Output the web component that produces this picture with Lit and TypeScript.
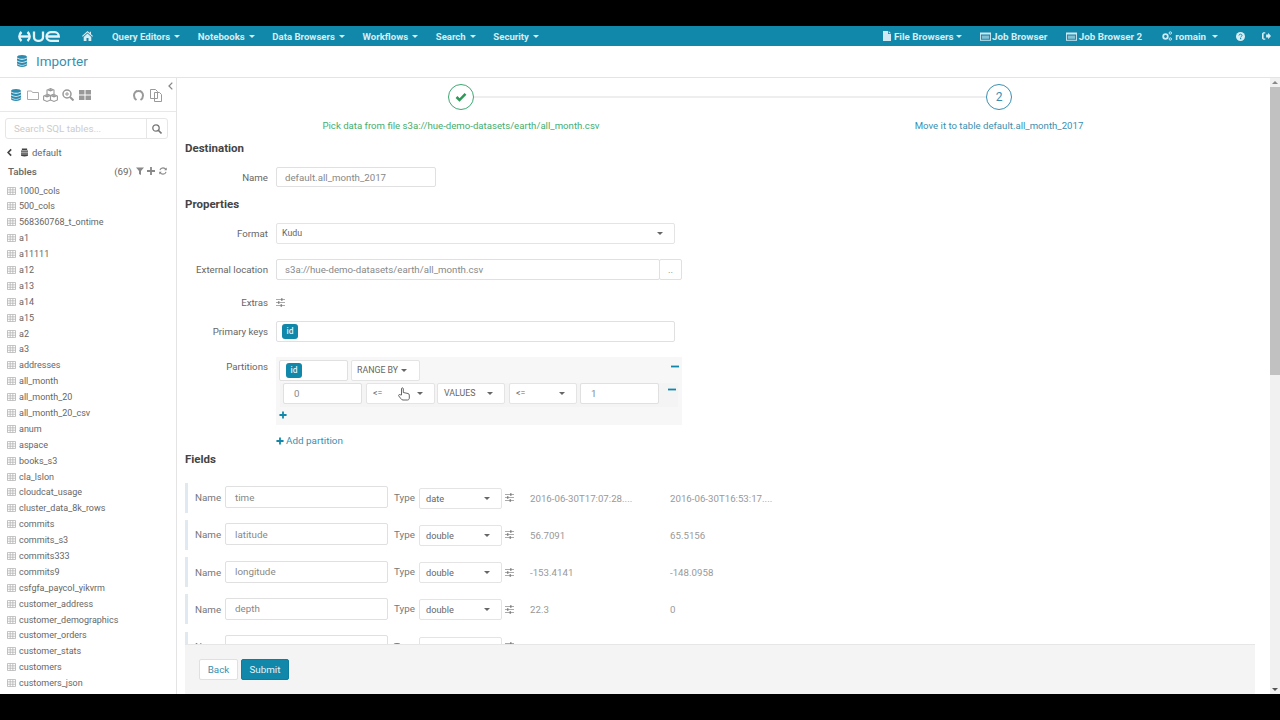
import { LitElement, html, css, svg } from "lit";
import { customElement } from "lit/decorators.js";

const ic = (w: number, h: number, vb: string, body: unknown, cls = "") =>
  html`<svg class="ic ${cls}" width=${w} height=${h} viewBox=${vb}>${body}</svg>`;

const db = (s = 12, cls = "") => ic(s, s, "0 0 12 12", svg`<path fill="currentColor" d="M6 0C3 0 1 .8 1 1.900S3 3.800 6 3.800s5-.8 5-1.900S9 0 6 0zM1 3.300V5c0 1.100 2 1.900 5 1.900S11 6.100 11 5V3.300C10.200 4.200 8.300 4.700 6 4.700S1.800 4.200 1 3.300zM1 6.300V8c0 1.100 2 1.900 5 1.900s5-.8 5-1.900V6.300C10.200 7.200 8.300 7.700 6 7.700S1.800 7.200 1 6.300zM1 9.100v1c0 1.100 2 1.900 5 1.900s5-.8 5-1.900v-1c-.8.900-2.700 1.500-5 1.500s-4.200-.6-5-1.500z"/>`, cls);
const caret = () => html`<span class="caret"></span>`;
const sliders = () => ic(9, 9, "0 0 9 9", svg`<path stroke="#a0a0a0" stroke-width=".9" fill="none" d="M0 1.500h9M0 4.500h9M0 7.500h9"/><path stroke="#808080" stroke-width="1.500" d="M5.800 .3v2.400M2.700 3.300v2.400M5.300 6.300v2.400"/>`);
const tableIc = () => ic(9, 8, "0 0 10 9", svg`<path fill="none" stroke="#b4b4b4" stroke-width=".9" d="M.5.500h9v8h-9zM.5 3.200h9M.5 5.900h9M3.500.500v8M6.500.500v8"/>`, "tbl");
const winIc = () => ic(11, 9, "0 0 12 9", svg`<path fill="#cfe8f1" d="M0 0h12v9H0zM1 2.200v5.800h10V2.200z"/><path fill="#cfe8f1" d="M2 3.500h8v3.500H2z" opacity=".6"/>`);

const tables = ["1000_cols","500_cols","568360768_t_ontime","a1","a11111","a12","a13","a14","a15","a2","a3","addresses","all_month","all_month_20","all_month_20_csv","anum","aspace","books_s3","cla_lslon","cloudcat_usage","cluster_data_8k_rows","commits","commits_s3","commits333","commits9","csfgfa_paycol_yikvrm","customer_address","customer_demographics","customer_orders","customer_stats","customers","customers_json"];

const fields = [
  { n: "time", t: "date", a: "2016-06-30T17:07:28....", b: "2016-06-30T16:53:17...." },
  { n: "latitude", t: "double", a: "56.7091", b: "65.5156" },
  { n: "longitude", t: "double", a: "-153.4141", b: "-148.0958" },
  { n: "depth", t: "double", a: "22.3", b: "0" },
  { n: "", t: "double", a: "2.3", b: "1" },
];

@customElement("app-root")
export class AppRoot extends LitElement {
  static styles = css`
    :host { display: flex; flex-direction: column; width: 1280px; height: 720px; background: #000; font-family: Roboto, "Liberation Sans", sans-serif; color: #666; overflow: hidden; }
    .ic { display: block; flex: none; }
    .black { height: 26px; flex: none; background: #000; }
    .nav { height: 20px; flex: none; background: #1187a9; display: flex; align-items: center; color: #d6edf4; font-size: 9.600px; font-weight: 700; padding-left: 18px; white-space: nowrap; }
    .nav .logo { margin-right: 22px; }
    .nav .home { margin-right: 19px; }
    .nav .item { display: flex; align-items: center; margin-right: 17.600px; }
    .nav .item .ic { margin-right: 3px; }
    .nav .right { margin-left: auto; display: flex; align-items: center; padding-right: 9px; font-size: 9.800px; }
    .nav .right .item:first-child { margin-right: 18px; }
    .nav .right .item:first-child .caret { margin-left: 2px; }
    .nav .job .ic { margin-right: 1.500px; }
    .nav .m20 { margin-right: 19px; }
    .nav .m21 { margin-right: 20px; }
    .nav .m18 { margin-right: 18px; }
    .nav .m17 { margin-right: 17px; }
    .nav .m17 .ic { margin-right: 0; }
    .caret { display: inline-block; width: 0; height: 0; border-left: 3px solid transparent; border-right: 3px solid transparent; border-top: 3px solid currentColor; margin-left: 4px; }
    .nav .wide { margin-left: 6px; }
    .title { height: 32px; flex: none; box-sizing: border-box; border-bottom: 1px solid #e4e4e4; padding-bottom: 2px; background: #fff; display: flex; align-items: center; padding-left: 16px; color: #3a8fb0; font-size: 13.500px; gap: 8px; }
    .title .ic { color: #2e8bb0; }
    .body { height: 616px; flex: none; display: flex; background: #fff; }
    .side { width: 177px; flex: none; box-sizing: border-box; border-right: 1px solid #e4e4e4; position: relative; overflow: hidden; font-size: 9.100px; }
    .collapse { position: absolute; right: 3px; top: 4px; }
    .icons { height: 34px; box-sizing: border-box; border-bottom: 1px solid #e8e8e8; display: flex; align-items: center; padding: 1px 0 0 9.500px; color: #aaa; }
    .icons .db { color: #2e8bb0; margin-right: 5.500px; }
    .sp3 { width: 3px; flex: none; }
    .sp4 { width: 4px; flex: none; }
    .sp5 { width: 5px; flex: none; }
    .sp6 { width: 6px; flex: none; }
    .sp9 { width: 9px; flex: none; }
    .sp42 { width: 42px; flex: none; }
    .search { margin: 6px 0 0 5px; width: 163px; height: 21px; display: flex; box-sizing: border-box; border: 1px solid #e6e6e6; border-radius: 3px; align-items: center; color: #ccc; font-size: 9.800px; }
    .search span { flex: 1; padding-left: 8px; }
    .search div { width: 21px; height: 100%; box-sizing: border-box; border-left: 1px solid #e6e6e6; display: flex; align-items: center; justify-content: center; }
    .dbrow { display: flex; align-items: center; height: 14px; margin-top: 6px; padding-left: 7px; color: #666; font-size: 9.500px; }
    .tablesrow { display: flex; align-items: center; height: 14px; margin-top: 5px; padding: 0 9px 0 8px; font-weight: 500; font-size: 9.800px; color: #666; }
    .tablesrow .cnt { margin-left: auto; margin-right: 4px; font-weight: 400; }
    .list { margin-top: 4.600px; }
    .tr { height: 15.900px; display: flex; align-items: center; padding-left: 7px; gap: 3px; white-space: nowrap; color: #666; font-size: 9px; }
    .main { flex: 1; min-width: 0; display: flex; flex-direction: column; }
    .scrollarea { flex: 1; min-height: 0; overflow: hidden; padding-left: 8px; }
    .circles { display: flex; align-items: center; margin: 6px 0 0 263px; width: 564px; height: 26px; }
    .circle { width: 26px; height: 26px; box-sizing: border-box; border-radius: 50%; border: 1px solid #3fa873; color: #2b9a58; display: flex; align-items: center; justify-content: center; flex: none; }
    .circle.blue { border-color: #3a8fb0; color: #3a8fb0; font-size: 12px; }
    .line { flex: 1; height: 2px; background: #eee; }
    .steps { display: grid; grid-template-columns: 538px 538px; margin: 9px 0 0 7px; height: 14px; font-size: 9.650px; line-height: 14px; text-align: center; white-space: nowrap; }
    .steps .g { color: #44ad6e; }
    .steps .b { color: #3a8fb0; }
    h3 { margin: 0; font-size: 11.500px; line-height: 16px; height: 16px; font-weight: 700; color: #444; }
    .h-dest { margin-top: 7px; }
    .h-prop { margin-top: 9px; }
    .h-fields { margin-top: 3px; margin-bottom: 16px; }
    .row { display: flex; align-items: center; font-size: 9.700px; }
    .lab { width: 83px; text-align: right; margin-right: 8px; flex: none; color: #666; white-space: nowrap; }
    .in { box-sizing: border-box; border: 1px solid #e0e0e0; border-radius: 2px; background: #fff; display: flex; align-items: center; color: #888; font-size: 9.700px; white-space: nowrap; flex: none; height: 21px; padding-left: 10px; }
    .sel { box-sizing: border-box; border: 1px solid #e4e4e4; border-radius: 2px; background: #fff; display: flex; align-items: center; justify-content: space-between; font-size: 8.800px; padding: 0 11px 0 6px; white-space: nowrap; position: relative; color: #666; flex: none; height: 21px; }
    .sel .caret { color: #666; margin: 0; }
    .badge { background: #1187a9; color: #dff2f7; font-size: 8.500px; border-radius: 3px; width: 16px; height: 15px; display: flex; align-items: center; justify-content: center; font-weight: 500; }
    .mt11 { margin-top: 11px; }
    .mt15 { margin-top: 15px; }
    .r-extras { margin-top: 16px; height: 14px; }
    .w-name { width: 160px; height: 20px; padding-left: 8px; }
    .w-format { width: 399px; height: 20.500px; padding-left: 5px; }
    .w-loc { width: 384px; padding-left: 8px; }
    .w-dots { width: 23px; justify-content: center; margin-left: -1px; padding-left: 0; }
    .w-pk { width: 399px; padding-left: 5px; }
    .w-pid { width: 69px; padding-left: 6px; }
    .w-range { width: 69px; justify-content: flex-start; gap: 3px; padding-left: 5px; }
    .w-from { width: 79px; }
    .w-op { width: 69px; margin-left: 1px; }
    .w-val { width: 68px; margin-left: -1px; }
    .w-op2 { width: 68px; margin-left: 1px; }
    .parts { width: 406px; height: 68px; background: #f7f7f7; box-sizing: border-box; padding-top: 3px; flex: none; }
    .plab { align-items: flex-start; margin-top: 15px; }
    .plab .lab { margin-top: 4px; }
    .pr1 { display: flex; align-items: center; height: 21px; padding-left: 3px; gap: 3px; }
    .pr1 .minus { margin-left: auto; margin-right: 3px; margin-top: -8px; }
    .pr2 { display: flex; height: 24px; margin: 2px 4px 0 4px; padding: 0 0 0 3px; gap: 3px; background: #f4f4f4; font-size: 9px; align-items: flex-start; }
    .pr2 .minus { margin: 5px 0 0 6px; }
    .cursor { position: absolute; left: 31px; top: 3px; }
    .plusrow { padding-left: 3px; margin-top: 4px; }
    .add { display: flex; align-items: center; gap: 2px; margin: 9px 0 0 91px; height: 14px; color: #3a8fb0; font-size: 9.900px; }
    .frow { height: 30px; margin-bottom: 7.300px; display: flex; align-items: center; border-left: 3px solid #dfe9ef; font-size: 9.800px; white-space: nowrap; }
    .frow .nm { margin-left: 7px; width: 30px; color: #777; }
    .frow .in { width: 163px; height: 22px; padding-left: 9px; font-size: 9.800px; color: #888; margin-top: -1px; }
    .frow .ty { margin-left: 6px; width: 25px; color: #777; margin-top: -1px; }
    .frow .sel { width: 83px; height: 21px; font-size: 9.200px; margin-right: 3px; margin-top: 1px; }
    .frow .sa { margin-left: 16px; width: 140px; color: #999; font-size: 9.700px; margin-top: 1px; }
    .frow .sb { color: #999; font-size: 9.700px; margin-top: 1px; }
    .foot { height: 50px; flex: none; box-sizing: border-box; margin: 0 15px 0 8px; background: #f4f4f4; border-top: 1px solid #e6e6e6; display: flex; align-items: center; padding: 0 0 1px 14px; gap: 3px; font-size: 9.800px; }
    .btn { height: 21px; box-sizing: border-box; border-radius: 2px; display: flex; align-items: center; justify-content: center; }
    .back { width: 39px; background: #fff; border: 1px solid #e0e0e0; color: #3a8fb0; }
    .sub { width: 48px; background: #1187a9; color: #e4f4f8; border: 1px solid #0e7c9c; }
    .mainwrap { flex: 1; min-width: 0; display: flex; }
    .sb-track { width: 10px; flex: none; background: #f1f1f1; display: flex; flex-direction: column; align-items: center; }
    .sb-up { width: 0; height: 0; margin: 3px 0 3px; border-left: 3px solid transparent; border-right: 3px solid transparent; border-bottom: 3px solid #888; }
    .sb-thumb { width: 10px; height: 288px; background: #c1c1c1; }
    .sb-dn { width: 0; height: 0; margin-top: auto; margin-bottom: 3px; border-left: 3px solid transparent; border-right: 3px solid transparent; border-top: 3px solid #555; }
  `;

  render() {
    const plus = (s = 9) => ic(s, s, "0 0 9 9", svg`<path stroke="#1187a9" stroke-width="2" d="M4.500 .5v8M.5 4.500h8"/>`);
    const minus = () => ic(8, 3, "0 0 8 3", svg`<path stroke="#1187a9" stroke-width="1.800" d="M0 1.500h8"/>`, "minus");
    return html`
      <div class="black"></div>
      <div class="nav">
        ${ic(42, 11, "0 0 42 11", svg`<g fill="none" stroke="#e4f3f7" stroke-width="2.400"><path d="M3.500 1C1.700 2.500 1.300 4 1.300 5.500S1.700 8.500 3.500 10M9.500 1c1.800 1.500 2.200 3 2.200 4.500s-.4 3-2.200 4.500" /><path d="M2 5.500h9" /></g><g fill="none" stroke="#e4f3f7" stroke-width="2.300"><path d="M16 .5v5.500a3.700 3.700 0 0 0 3.700 3.800h1.600a3.700 3.700 0 0 0 3.700-3.800V.5" /><path d="M28.500 5.500H40.800a4 4.300 0 0 0-4-4.300h-4a4.300 4.300 0 0 0 0 8.600H41" /></g>`, "logo")}
        ${ic(11, 10, "0 0 11 10", svg`<path fill="#d6edf4" d="M5.500 0 0 5l.7.700L5.500 1.400l4.800 4.300.7-.7-2-1.800V.8H7.800v1.300zM1.700 6v4h2.800V7H6.500v3h2.800V6L5.500 2.600z"/>`, "home")}
        <span class="item">Query Editors${caret()}</span>
        <span class="item">Notebooks${caret()}</span>
        <span class="item">Data Browsers${caret()}</span>
        <span class="item">Workflows${caret()}</span>
        <span class="item">Search${caret()}</span>
        <span class="item">Security${caret()}</span>
        <div class="right">
          <span class="item">${ic(8, 10, "0 0 8 10", svg`<path fill="#cfe8f1" d="M0 0h5v3h3v7H0zM5.700 0 8 2.300H5.700z"/>`)}File Browsers${caret()}</span>
          <span class="item job m20">${winIc()}Job Browser</span>
          <span class="item job m21">${winIc()}Job Browser 2</span>
          <span class="item m18">${ic(10, 10, "0 0 10 10", svg`<circle cx="3.500" cy="5.500" r="2.300" fill="none" stroke="#cfe8f1" stroke-width="1.800"/><circle cx="8.300" cy="2" r="1.200" fill="none" stroke="#cfe8f1"/><circle cx="8.300" cy="8" r="1.200" fill="none" stroke="#cfe8f1"/>`)}romain<span class="caret wide"></span></span>
          <span class="item m17">${ic(9, 9, "0 0 10 10", svg`<circle cx="5" cy="5" r="5" fill="#d6edf4"/><path d="M3.300 3.900C3.400 2.900 4.100 2.400 5 2.400c1 0 1.700.6 1.700 1.400 0 1.200-1.500 1.100-1.500 2.300" fill="none" stroke="#1187a9" stroke-width="1.100"/><path d="M4.500 6.800h1.300V8H4.500z" fill="#1187a9"/>`)}</span>
          ${ic(9, 8, "0 0 11 9", svg`<path fill="#d6edf4" d="M0 1.500 1.500 0H4v1.400H2v6.200h2V9H1.500L0 7.500zM5 2.700h2.500V.5L11 4.500 7.500 8.500V6.300H5z"/>`)}
        </div>
      </div>
      <div class="title">${db(12)}<span>Importer</span></div>
      <div class="body">
        <div class="side">
          <div class="collapse">${ic(5, 8, "0 0 5 8", svg`<path d="M4.300.6 1 4l3.300 3.400" fill="none" stroke="#888" stroke-width="1.300"/>`)}</div>
          <div class="icons">
            ${db(12, "db")}
            ${ic(12, 10, "0 0 12 10", svg`<path d="M.5 1h4l1 1.500h6v7h-11z" fill="none" stroke="#aaa"/>`)}
            <span class="sp4"></span>
            ${ic(15, 14, "0 0 15 14", svg`<g fill="#fff" stroke="#999" stroke-width="1.100"><path d="M7.500 .6 11 2V6L7.500 7.400 4 6V2z"/><path d="M4 6.500 7.500 8V12L4 13.400 .6 12V8z"/><path d="M11 6.500 14.400 8V12L11 13.400 7.500 12V8z"/></g><g fill="#999"><path d="M7.500 1 10.600 2.200 7.500 3.400 4.400 2.200zM4 7 7 8.200 4 9.400 1 8.200zM11 7 14 8.200 11 9.400 8 8.200z"/></g>`)}
            <span class="sp4"></span>
            ${ic(12, 12, "0 0 12 12", svg`<circle cx="5" cy="5" r="4" fill="none" stroke="#999" stroke-width="1.500"/><path d="M8 8l3.500 3.500" stroke="#999" stroke-width="2"/><path d="M3 5h4M5 3v4" stroke="#999"/>`)}
            <span class="sp5"></span>
            ${ic(12, 10, "0 0 12 10", svg`<path fill="#999" d="M0 0h5.500v4.500H0zM6.500 0H12v4.500H6.500zM0 5.500h5.500V10H0zM6.500 5.500H12V10H6.500z"/>`)}
            <span class="sp42"></span>
            ${ic(11, 11, "0 0 11 11", svg`<path d="M3.500 10C2 9 1 7.500 1 5.500 1 3 3 1 5.500 1S10 3 10 5.500C10 7.500 9 9 7.500 10" fill="none" stroke="#999" stroke-width="2"/><path d="M2.200 1.800 3 .5 4.800 1.500M8.800 1.800 8 .5 6.200 1.500" fill="none" stroke="#999"/>`)}
            <span class="sp6"></span>
            ${ic(12, 13, "0 0 12 13", svg`<path d="M.5.500h5l2 2v7h-7zM4.500 3.500h5l2 2v7h-7z" fill="#fff" stroke="#999"/>`)}
          </div>
          <div class="search"><span>Search SQL tables...</span><div>${ic(10, 10, "0 0 10 10", svg`<circle cx="4" cy="4" r="3.200" fill="none" stroke="#777" stroke-width="1.300"/><path d="M6.500 6.500l3 3" stroke="#777" stroke-width="1.600"/>`)}</div></div>
          <div class="dbrow">${ic(5, 9, "0 0 6 9", svg`<path d="M5 .8 1.300 4.500 5 8.200" fill="none" stroke="#444" stroke-width="2"/>`)}<span class="sp9"></span>${ic(7, 9, "0 0 8 9", svg`<path fill="#444" d="M1 0h6v1.500H1zM0 2.200h8v1.400H0zM0 4.400h8v1.400H0zM0 6.600h8V8c0 .5-1 1-4 1S0 8.500 0 8z"/>`)}<span class="sp4"></span>default</div>
          <div class="tablesrow"><span>Tables</span><span class="cnt">(69)</span>
            ${ic(8, 8, "0 0 8 8", svg`<path fill="#888" d="M0 .5h8L5 4v4L3 7V4z"/>`)}<span class="sp3"></span>
            ${ic(8, 8, "0 0 8 8", svg`<path stroke="#888" stroke-width="1.800" d="M4 0v8M0 4h8"/>`)}<span class="sp4"></span>
            ${ic(8, 8, "0 0 9 9", svg`<path d="M1 3.500C1.500 2 3 1 4.500 1S7 1.500 8 3M8 5.500C7.500 7 6 8 4.500 8S2 7.500 1 6" fill="none" stroke="#888" stroke-width="1.200"/><path fill="#888" d="M8.700.7v3H5.900zM.3 8.300v-3h2.800z"/>`)}
          </div>
          <div class="list">${tables.map((t) => html`<div class="tr">${tableIc()}<span>${t}</span></div>`)}</div>
        </div>
        <div class="mainwrap">
          <div class="main">
            <div class="scrollarea">
              <div class="circles">
                <div class="circle">${ic(12, 10, "0 0 12 10", svg`<path d="M1.500 5 4.500 8 10.500 1.800" fill="none" stroke="#2b9a58" stroke-width="2.500"/>`)}</div>
                <div class="line"></div>
                <div class="circle blue">2</div>
              </div>
              <div class="steps"><span class="g">Pick data from file s3a://hue-demo-datasets/earth/all_month.csv</span><span class="b">Move it to table default.all_month_2017</span></div>
              <h3 class="h-dest">Destination</h3>
              <div class="row mt11"><span class="lab">Name</span><div class="in w-name">default.all_month_2017</div></div>
              <h3 class="h-prop">Properties</h3>
              <div class="row mt11"><span class="lab">Format</span><div class="sel w-format">Kudu${caret()}</div></div>
              <div class="row mt15"><span class="lab">External location</span><div class="in w-loc">s3a://hue-demo-datasets/earth/all_month.csv</div><div class="in w-dots">..</div></div>
              <div class="row r-extras"><span class="lab">Extras</span>${sliders()}</div>
              <div class="row mt11"><span class="lab">Primary keys</span><div class="in w-pk"><span class="badge">id</span></div></div>
              <div class="row plab"><span class="lab">Partitions</span>
                <div class="parts">
                  <div class="pr1">
                    <div class="in w-pid"><span class="badge">id</span></div>
                    <div class="sel w-range">RANGE BY${caret()}</div>
                    ${minus()}
                  </div>
                  <div class="pr2">
                    <div class="in w-from">0</div>
                    <div class="sel w-op"><span>&lt;=</span>${caret()}
                      <div class="cursor">${ic(12, 14, "0 0 12 14", svg`<path d="M3.500 8V1.800c0-1.300 1.800-1.300 1.800 0V5.500l4.700 1c.8.200 1.300.8 1.300 1.600V11c0 1-.6 2-1.800 2H5c-1 0-1.500-.5-2-1.200L.8 9c-.7-1 .6-2 1.400-1.200z" fill="#fff" stroke="#555" stroke-width=".9"/>`)}</div>
                    </div>
                    <div class="sel w-val">VALUES${caret()}</div>
                    <div class="sel w-op2"><span>&lt;=</span>${caret()}</div>
                    <div class="in w-from">1</div>
                    ${minus()}
                  </div>
                  <div class="plusrow">${plus(8)}</div>
                </div>
              </div>
              <div class="add">${plus(8)}<span>Add partition</span></div>
              <h3 class="h-fields">Fields</h3>
              ${fields.map((f) => html`<div class="frow"><span class="nm">Name</span><div class="in">${f.n}</div><span class="ty">Type</span><div class="sel">${f.t}${caret()}</div>${sliders()}<span class="sa">${f.a}</span><span class="sb">${f.b}</span></div>`)}
            </div>
            <div class="foot"><div class="btn back">Back</div><div class="btn sub">Submit</div></div>
          </div>
          <div class="sb-track"><div class="sb-up"></div><div class="sb-thumb"></div><div class="sb-dn"></div></div>
        </div>
      </div>
      <div class="black"></div>
    `;
  }
}
